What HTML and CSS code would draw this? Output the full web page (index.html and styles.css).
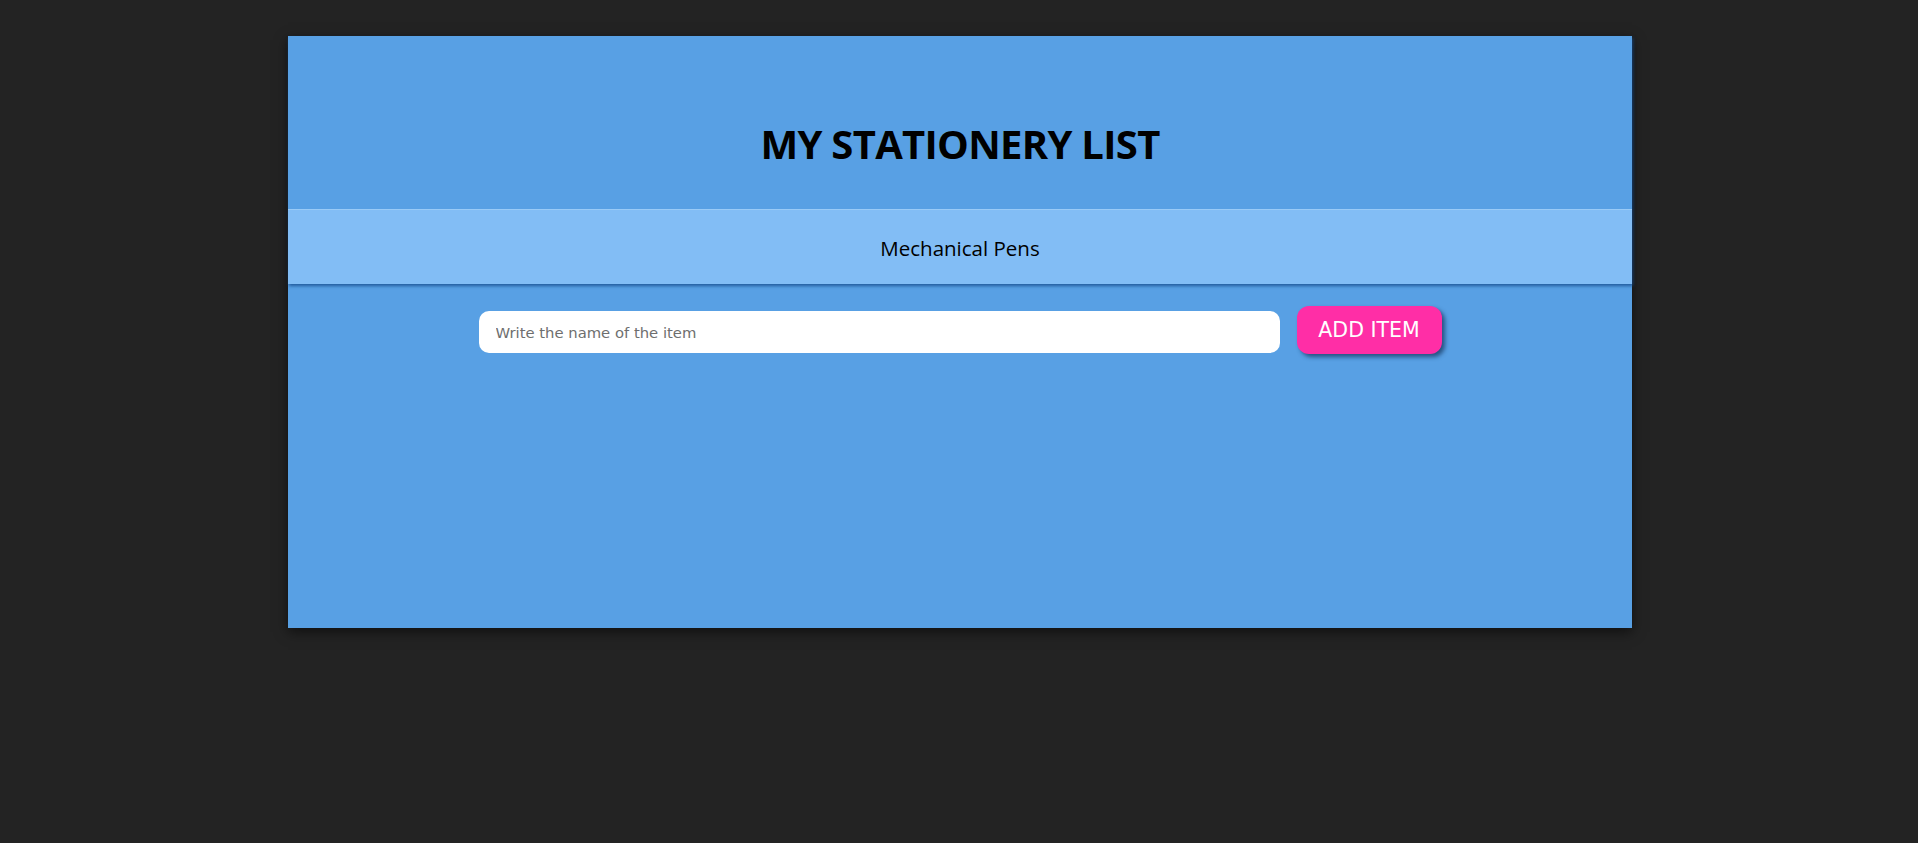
FILE: index.html
```html
<!DOCTYPE html>
<html lang="en">
<head>
<meta charset="utf-8">
<title>My Stationery List</title>
<link rel="stylesheet" href="styles.css">
</head>
<body>
<div class="panel">
  <header class="header">
    <h1 class="title">MY STATIONERY LIST</h1>
    <div class="band"><span class="item">Mechanical Pens</span></div>
  </header>
  <form class="form" onsubmit="return false">
    <input class="field" type="text" placeholder="Write the name of the item">
    <button class="add" type="button">ADD ITEM</button>
  </form>
</div>
</body>
</html>
```

FILE: styles.css
```css
html, body {
  margin: 0;
  padding: 0;
  background: #232323;
  height: 100%;
}
body {
  font-family: "Open Sans", "Noto Sans", sans-serif;
}
.panel {
  width: 1344px;
  height: 592px;
  margin: 36px 0 0 288px;
  background: #58a0e4;
  box-shadow: 0 4px 12px rgba(0, 0, 0, 0.55);
}
.header {
  box-shadow: 1px 2px 3px rgba(20, 75, 140, 0.8);
  position: relative;
}
.title {
  margin: 0;
  padding: 83px 0 40px;
  height: 50px;
  line-height: 50px;
  font-size: 40px;
  letter-spacing: -0.7px;
  font-weight: 700;
  color: #000;
  text-align: center;
}
.band {
  height: 74px;
  border-top: 1px solid #9acbf7;
  background: #82bdf5;
  display: flex;
  align-items: center;
  justify-content: center;
}
.item {
  font-size: 20.5px;
  color: #000;
  margin-top: 1px;
}
.form {
  display: flex;
  justify-content: center;
  align-items: center;
  gap: 17px;
  padding-top: 22px;
  margin: 0;
}
.field {
  box-sizing: border-box;
  width: 801px;
  height: 42px;
  border: none;
  border-radius: 10px;
  background: #fff;
  padding: 0 17px;
  font-family: "DejaVu Sans", Tahoma, sans-serif;
  font-size: 14.8px;
  color: #333;
  outline: none;
  margin-top: 4px;
}
.field::placeholder {
  color: #6e6e6e;
}
.add {
  width: 145px;
  height: 48px;
  border: none;
  border-radius: 12px;
  background: #ff2ea6;
  color: #fff;
  font-family: "DejaVu Sans", Tahoma, sans-serif;
  font-size: 20.5px;
  box-shadow: 3px 3px 4px rgba(20, 50, 90, 0.7);
  cursor: pointer;
  padding: 0;
}
```
